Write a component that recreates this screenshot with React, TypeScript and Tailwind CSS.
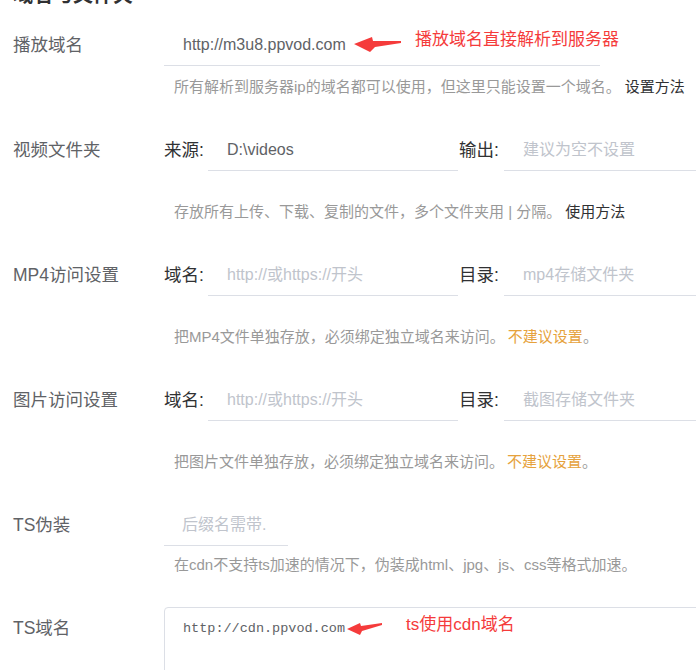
const sans = "font-['Liberation_Sans','Noto_Sans_CJK_SC',sans-serif]";

function Arrow({ className, points, w, h }: { className: string; points: string; w: number; h: number }) {
  return (
    <svg className={className} width={w} height={h} viewBox={`0 0 ${w} ${h}`}>
      <polygon points={points} fill="#f53b3b" />
    </svg>
  );
}

function Label({ children }: { children: React.ReactNode }) {
  return (
    <div className="w-[151px] shrink-0 text-[17.5px] leading-[42px] text-[#606266]">{children}</div>
  );
}

function SubLabel({ children, w }: { children: React.ReactNode; w: string }) {
  return <div className={`${w} shrink-0 text-[17.5px] leading-[42px] text-[#303133]`}>{children}</div>;
}

function Field({
  value,
  placeholder,
  className,
}: {
  value?: string;
  placeholder?: string;
  className: string;
}) {
  return (
    <input
      readOnly
      defaultValue={value}
      placeholder={placeholder}
      className={`${className} h-[42px] border-b border-[#dcdfe6] pl-[19px] text-[16px] text-[#606266] outline-none placeholder:text-[#c0c4cc] bg-transparent`}
    />
  );
}

function Hint({ children, className }: { children: React.ReactNode; className: string }) {
  return (
    <div className={`${className} pl-[10px] text-[15px] leading-[20px] text-[#999] whitespace-nowrap`}>
      {children}
    </div>
  );
}

export default function App() {
  return (
    <div className={`${sans} relative w-[696px] h-[670px] overflow-hidden bg-white pl-[13px]`}>
      <h2 className="-mt-[17px] h-[24px] text-[20px] leading-[24px] font-bold text-[#303133]">域名与文件夹</h2>

      <div className="mt-[17px] flex mb-[32px]">
        <Label>播放域名</Label>
        <div className="flex-1 min-w-0">
          <Field value="http://m3u8.ppvod.com" className="w-[436px]" />
          <Hint className="mt-[11px]">
            所有解析到服务器ip的域名都可以使用，但这里只能设置一个域名。
            <span className="ml-[4px] text-[#303133]">设置方法</span>
          </Hint>
        </div>
      </div>

      <div className="flex mb-[32px]">
        <Label>视频文件夹</Label>
        <div className="flex-1 min-w-0">
          <div className="flex">
            <SubLabel w="w-[44px]">来源:</SubLabel>
            <Field value="D:\videos" className="w-[250px]" />
            <SubLabel w="w-[45px] ml-px">输出:</SubLabel>
            <Field placeholder="建议为空不设置" className="flex-1 min-w-0" />
          </div>
          <Hint className="mt-[31px]">
            存放所有上传、下载、复制的文件，多个文件夹用 | 分隔。
            <span className="ml-[4px] text-[#303133]">使用方法</span>
          </Hint>
        </div>
      </div>

      <div className="flex mb-[32px]">
        <Label>MP4访问设置</Label>
        <div className="flex-1 min-w-0">
          <div className="flex">
            <SubLabel w="w-[44px]">域名:</SubLabel>
            <Field placeholder="http://或https://开头" className="w-[250px]" />
            <SubLabel w="w-[45px] ml-px">目录:</SubLabel>
            <Field placeholder="mp4存储文件夹" className="flex-1 min-w-0" />
          </div>
          <Hint className="mt-[31px]">
            把MP4文件单独存放，必须绑定独立域名来访问。
            <span className="ml-[3px] text-[#e6a23c]">不建议设置</span>。
          </Hint>
        </div>
      </div>

      <div className="flex mb-[32px]">
        <Label>图片访问设置</Label>
        <div className="flex-1 min-w-0">
          <div className="flex">
            <SubLabel w="w-[44px]">域名:</SubLabel>
            <Field placeholder="http://或https://开头" className="w-[250px]" />
            <SubLabel w="w-[45px] ml-px">目录:</SubLabel>
            <Field placeholder="截图存储文件夹" className="flex-1 min-w-0" />
          </div>
          <Hint className="mt-[31px]">
            把图片文件单独存放，必须绑定独立域名来访问。
            <span className="ml-[3px] text-[#e6a23c]">不建议设置</span>。
          </Hint>
        </div>
      </div>

      <div className="flex mb-[32px]">
        <Label>TS伪装</Label>
        <div className="flex-1 min-w-0">
          <input
            readOnly
            placeholder="后缀名需带."
            className="w-[124px] h-[42px] border-b border-[#dcdfe6] pl-[18px] text-[16px] outline-none placeholder:text-[#c0c4cc] bg-transparent"
          />
          <Hint className="mt-[9px]">在cdn不支持ts加速的情况下，伪装成html、jpg、js、css等格式加速。</Hint>
        </div>
      </div>

      <div className="flex">
        <Label>TS域名</Label>
        <div className="flex-1 min-w-0">
          <div className="w-[600px] h-[90px] border border-[#dcdfe6] rounded-[4px] pt-[11px] pl-[18px] font-['Liberation_Mono',monospace] text-[13.5px] leading-[20px] text-[#606266]">
            http://cdn.ppvod.com
          </div>
        </div>
      </div>

      <Arrow
        className="absolute left-[353px] top-[36px]"
        w={49}
        h={17}
        points="1,8 19,1 20,5 48,5 48,7 22,11 17,16"
      />
      <div className="absolute left-[415px] top-[28px] text-[17px] leading-[24px] text-[#f53b3b]">播放域名直接解析到服务器</div>

      <Arrow
        className="absolute left-[346px] top-[621px]"
        w={37}
        h={15}
        points="1,8 14,2 15,5 36,2 36,4 16,10 14,14"
      />
      <div className="absolute left-[406px] top-[613px] text-[17px] leading-[24px] text-[#f53b3b]">ts使用cdn域名</div>
    </div>
  );
}
